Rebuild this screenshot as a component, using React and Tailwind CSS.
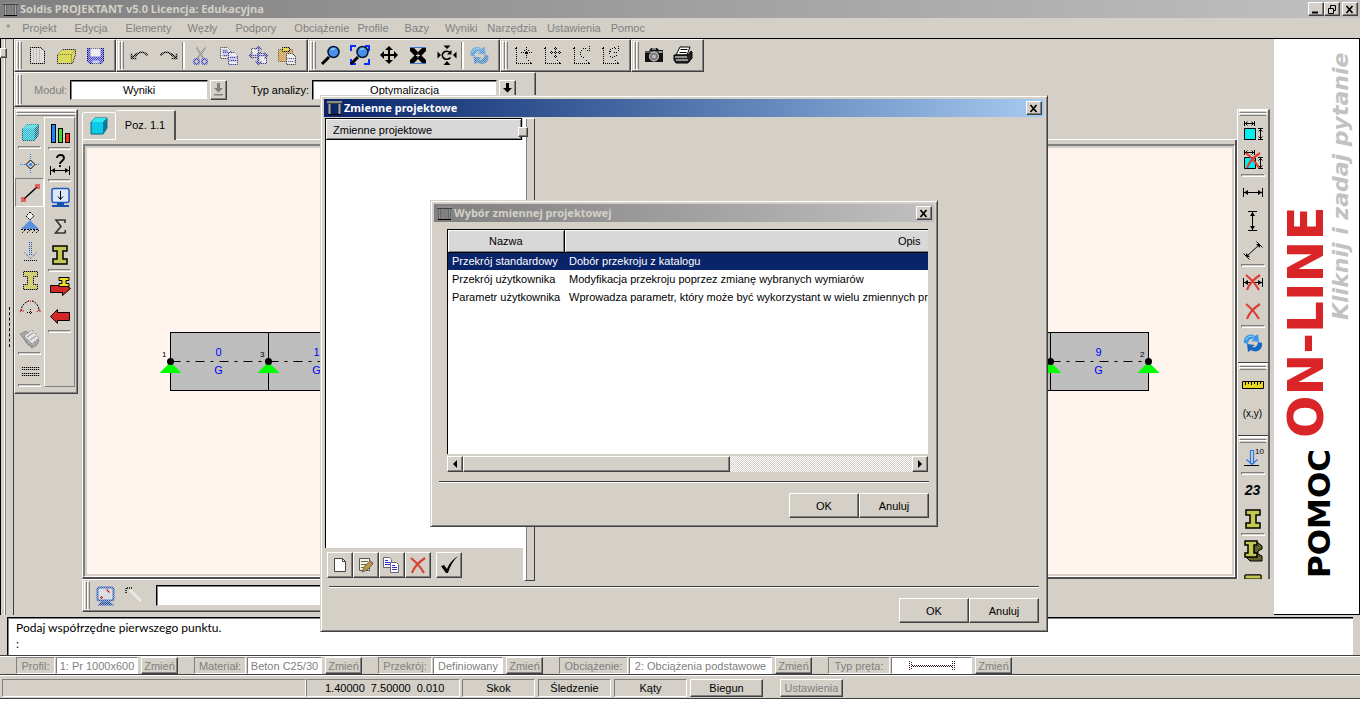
import React from 'react';
import clsx from 'clsx';

const MENU = [
  ['Projekt', 'mr-[18px]'], ['Edycja', 'mr-[18px]'], ['Elementy', 'mr-4'], ['Węzły', 'mr-[18px]'],
  ['Podpory', 'mr-[18px]'], ['Obciążenie', 'mr-2'], ['Profile', 'mr-4'], ['Bazy', 'mr-4'],
  ['Wyniki', 'mr-2.5'], ['Narzędzia', 'mr-2.5'], ['Ustawienia', 'mr-2.5'], ['Pomoc', ''],
];

const ROWS = [
  ['Przekrój standardowy', 'Dobór przekroju z katalogu'],
  ['Przekrój użytkownika', 'Modyfikacja przekroju poprzez zmianę wybranych wymiarów'],
  ['Parametr użytkownika', 'Wprowadza parametr, który może być wykorzystant w wielu zmiennych projektowych'],
];

const RAISED = 'border border-t-white border-l-white border-r-[#404040] border-b-[#404040] shadow-[inset_-1px_-1px_0_#808080]';
const SUNKEN = 'border border-t-[#808080] border-l-[#808080] border-r-white border-b-white';
const FIELD = 'bg-white border border-t-black border-l-black border-b-[#d4d0c8] border-r-[#d4d0c8] shadow-[inset_1px_1px_0_#808080]';
// checkerboard mask used for disabled pictures
const DITHER = '[mask-image:conic-gradient(#000_25%,#0004_0_50%,#000_0_75%,#0004_0)] [mask-size:2px_2px]';

/* ---------- icons ---------- */

function Ico({ children, dim, size = 24 }) {
  return (
    <svg width={size} height={size} viewBox={`0 0 ${size} ${size}`} fill="none" className={clsx('shrink-0', dim && DITHER)} aria-hidden="true">
      {dim ? <g transform="translate(.5 .5)">{children}</g> : children}
    </svg>
  );
}

function AppIcon({ muted }) {
  return (
    <svg width="15" height="14" viewBox="0 0 15 14" shapeRendering="crispEdges" className="shrink-0" aria-hidden="true">
      <path d="M0 0h15v2H0z" fill={muted ? '#8c8c8c' : '#8a8a8a'} />
      <path d="M0 2h15v1H0z" fill="#404040" />
      <path d="M1 3h3v10H1zM11 3h3v10h-3z" fill="#686868" />
      <path d="M2 3h1v10H2zM12 3h1v10h-1z" fill={muted ? '#8c8c8c' : '#a8a8a8'} />
      <path d="M1 13h13v1H1z" fill="#000" />
    </svg>
  );
}

const Page = () => (
  <Ico dim>
    <path d="M5 4h10l4 3v13H5z" fill="#e8e8e8" stroke="#000" />
    <path d="M8 5v14M11 5v14M14 5v14" stroke="#aaa" />
  </Ico>
);
const Folder = () => (
  <Ico dim>
    <path d="M3 20v-9l5-5h13v5l-3 9z" fill="#e0e020" stroke="#222" />
    <path d="M4 11h13l4-5M17 11v8" stroke="#888800" />
  </Ico>
);
const Disk = () => (
  <Ico dim>
    <path d="M4 5h16v13l-2 2H6l-2-2z" fill="#4848e8" stroke="#000080" />
    <path d="M7 5h10v8H7z" fill="#fff" /><path d="M9 17h7v3H9z" fill="#ccf" />
  </Ico>
);
const Undo = () => (
  <Ico dim><path d="M8 13c2-5 9-6 12-1M4 10v5h5M4 15l5-5" stroke="#000" strokeWidth="1.600" /></Ico>
);
const Redo = () => (
  <Ico dim><path d="M16 13c-2-5-9-6-12-1M20 10v5h-5M20 15l-5-5" stroke="#000" strokeWidth="1.600" /></Ico>
);
const Scissors = () => (
  <Ico dim>
    <path d="M8 4l7 11M17 4L9 15" stroke="#888" strokeWidth="2" />
    <circle cx="8" cy="18" r="2.500" stroke="#4848c8" strokeWidth="2" /><circle cx="16" cy="18" r="2.500" stroke="#4848c8" strokeWidth="2" />
  </Ico>
);
const CopyDim = () => (
  <Ico dim>
    <path d="M3 4h7l3 3v8H3z" fill="#fff" stroke="#555" /><path d="M5 7h5M5 9h6M5 12h6" stroke="#44c" strokeWidth="1.500" />
    <path d="M11 9h6l3 3v9h-9z" fill="#fff" stroke="#44a" /><path d="M12 14h7M12 17h7" stroke="#44c" strokeWidth="1.500" />
  </Ico>
);
const CopyMove = () => (
  <Ico dim>
    <path d="M5 5h6l3 3v6H5z" fill="#fff" stroke="#555" /><path d="M11 10h6l3 3v7h-9z" fill="#fff" stroke="#44a" />
    <path d="M12 3v18M3 12h18M9 6l3-3 3 3M9 18l3 3 3-3M18 9l3 3-3 3M6 9l-3 3 3 3" stroke="#44a" strokeWidth="1.500" />
  </Ico>
);
const Paste = () => (
  <Ico dim>
    <path d="M3 6h14v12H3z" fill="#d8a040" stroke="#806020" /><path d="M7 4h7v4H7z" fill="#f0e000" stroke="#000" />
    <path d="M11 10h6l3 3v8h-9z" fill="#fff" stroke="#444" /><path d="M12 15h7M12 18h7" stroke="#66c" />
  </Ico>
);
const Lens = () => (
  <>
    <path d="M3 21l7-7" stroke="#000" strokeWidth="3" />
    <circle cx="14.500" cy="9" r="5.500" fill="#4a90e8" stroke="#001830" strokeWidth="1.500" />
    <path d="M12 7c1-1 2-2 4-1" stroke="#9cf" strokeWidth="1.500" />
  </>
);
const Zoom = () => <Ico><Lens /></Ico>;
const ZoomAll = () => (
  <Ico><path d="M3 8V3h5M17 3h4v5M21 16v5h-5M8 21H3v-5" stroke="#0030ff" strokeWidth="2" /><Lens /></Ico>
);
const Move = () => (
  <Ico>
    <path d="M12 5v14M5 12h14" stroke="#000" strokeWidth="2" />
    <path d="M12 3l4 4H8zM12 21l4-4H8zM3 12l4-4v8zM21 12l-4-4v8z" fill="#000" />
  </Ico>
);
const Fit = () => (
  <Ico>
    <path d="M4 4.500h16M4 20.500h16" stroke="#3a78d0" />
    <path d="M4 5h4l4 4 4-4h4v3l-4.500 4.500L20 17v3h-4l-4-4-4 4H4v-3l4.500-4.500L4 8z" fill="#000" />
    <path d="M10 12.500h4M12 10.500v4" stroke="#d4d0c8" />
  </Ico>
);
const Orbit = () => (
  <Ico>
    <path d="M12 6L8.500 2.500h7zM12 18l-3.500 4h7zM6 12L2.500 8.500v7zM18 12l3.500-3.500v7z" fill="#000" />
    <path d="M15.500 10A4.500 4 0 1 0 15.500 14.500" stroke="#000" strokeWidth="1.600" /><path d="M16.500 7v4.500H12z" fill="#000" />
  </Ico>
);
const Refresh = ({ dim }) => (
  <Ico dim={dim}>
    <path d="M3 12c-1-6 5-11 11-7l3-2 1 8-8-1 3-2c-3-1-6 1-6 5z" fill="#3a98e8" />
    <path d="M21 12c1 6-5 11-11 7l-3 2-1-8 8 1-3 2c3 1 6-1 6-5z" fill={dim ? '#3a88d0' : '#1668c0'} />
    <path d="M5 9c1-3 4-5 8-3" stroke="#9cd4ff" />
  </Ico>
);
const Axis = ({ kind }) => (
  <Ico>
    <g stroke="#000" strokeDasharray="1 1" shapeRendering="crispEdges">
      <path d="M5.500 5v16M5 20.500h15M2.500 7.500l3-3 3 3M17.500 17.500l3 3-3 3" />
      {kind === 'plus' && <path d="M15.500 4v11M10 9.500h11M13.500 7.500l4 4M17.500 7.500l-4 4" />}
      {kind === 'move' && <path d="M15.500 4v11M10 9.500h11M13.500 5.500h4M13.500 13.500h4M11.500 7.500v4M19.500 7.500v4" />}
      {kind === 'c' && <path d="M20.500 3v4.500h-4M18.500 6.500l-3-2-3 2-1 4 1 3 3 1 3-2" />}
      {kind === 'g' && <path d="M20.500 3v4.500M18.500 5.500l-3-1-3 2-1 4 1 3 3 1 3-2 1-3h-4" />}
    </g>
  </Ico>
);
const Camera = () => (
  <Ico>
    <path d="M3 8h4l2-3h6l2 2h4v12H3z" fill="#111" /><path d="M3 8h18v2H3z" fill="#555" />
    <circle cx="12" cy="13.500" r="4.500" fill="#777" stroke="#ddd" /><circle cx="12" cy="13.500" r="2" fill="#bbb" />
    <path d="M10 6h4M17 9h3" stroke="#eee" />
  </Ico>
);
const Printer = () => (
  <Ico>
    <path d="M9 4h10l-3 8H5z" fill="#fff" stroke="#000" /><path d="M9.500 6.500h7M8.500 9.500h7" stroke="#000" />
    <path d="M3 12h14l3-4 1 1v6l-4 5H5l-2-3z" fill="#222" stroke="#000" /><path d="M4 14h12M5 17h12" stroke="#fff" />
  </Ico>
);
const Cube = ({ dim }) => (
  <Ico dim={dim}>
    <path d="M4 8l4-4h12v10l-4 6H4z" fill="#10c8e8" stroke="#006878" /><path d="M4 8l4-4h12l-4 4z" fill="#30e8f0" />
    <path d="M16 8l4-4v10l-4 6z" fill="#0878a0" />
  </Ico>
);
const Bars = () => (
  <Ico>
    <g stroke="#000" shapeRendering="crispEdges">
      <path d="M3 3h4v18H3z" fill="#1888ff" /><path d="M10 7h4v14h-4z" fill="#40e020" /><path d="M17 12h4v9h-4z" fill="#ff3010" />
    </g>
  </Ico>
);
const Node = () => (
  <Ico>
    <path d="M12.500 2v20M2 12.500h20" stroke="#2080ff" strokeDasharray="1 1" shapeRendering="crispEdges" />
    <path d="M12.500 8l4.500 4.500-4.500 4.500L8 12.500z" fill="#d4d0c8" stroke="#000" /><circle cx="12.500" cy="12.500" r="1.500" fill="#2080ff" />
  </Ico>
);
const Rod = () => (
  <Ico>
    <path d="M6 18L19 6" stroke="#000" strokeWidth="1.500" />
    <path d="M3 16h5v5H3zM17 3h5v5h-5z" fill="#e02020" fillOpacity=".6" />
  </Ico>
);
const Support = () => (
  <Ico>
    <path d="M12 10l9 9H3z" fill="#5a90e0" />
    <path d="M12 2l4 4-4 4-4-4z" fill="#eee" stroke="#000" strokeDasharray="2 1" />
    <path d="M3 19.500h18M7 20l-3 3M12 20l-3 3M17 20l-3 3M21 20l-3 3" stroke="#000" strokeDasharray="2 1" />
  </Ico>
);
const Load = () => (
  <Ico>
    <path d="M11.500 3v14M13.500 3v14M6.500 13.500l6 6 6-6" stroke="#2050b8" strokeDasharray="1 1" />
    <path d="M6 21.500h13" stroke="#000" strokeDasharray="1 1" shapeRendering="crispEdges" />
  </Ico>
);
const BEAM = 'M5 3h14v5h-4v8h4v5H5v-5h4V8H5z';
const Beam = ({ dim }) => (
  <Ico dim={dim}><path d={BEAM} fill={dim ? '#d0d040' : '#c4c850'} stroke="#000" strokeWidth={dim ? 1 : 1.5} /></Ico>
);
const Beam3d = () => (
  <Ico>
    <path d="M16 3l5 4v3l-4 2v3l4 2v5H9l-5-5z" fill="#606028" stroke="#000" />
    <path d="M4 2h12v4h-3v8h3v4H4v-4h3V6H4z" fill="#c4c850" stroke="#000" strokeWidth="1.500" />
  </Ico>
);
const Arc = () => (
  <Ico>
    <path d="M3 14c0-5 4-9 8-10M14 4c4 1 7 5 7 10" stroke="#000" strokeDasharray="2 1" />
    <path d="M10 4h5M2 15l2-2 2 2M19 15l2-2 2 2" stroke="#d22" strokeWidth="1.500" strokeDasharray="1 1" />
    <path d="M12.500 12v6M9 15.500h6" stroke="#000" strokeDasharray="1 1" />
  </Ico>
);
const Catalog = () => (
  <Ico>
    <path d="M2 8l6-3 13 9-2 5-5 3z" fill="#a8a8a8" stroke="#666" strokeDasharray="1 1" />
    <path d="M6 10l8-6 7 8-7 6z" fill="#e4e4e4" stroke="#777" strokeDasharray="1 1" />
    <path d="M9 11l6-4M12 14l6-4M4 10l5 8 6 3" stroke="#888" />
  </Ico>
);
const Ground = () => (
  <Ico dim><path d="M3 9h18M3 11h18M3 15h18M3 17h18" stroke="#000" /></Ico>
);
const HArrow = ({ y = 12 }) => (
  <>
    <path d={`M2.500 ${y - 4}v9M21.500 ${y - 4}v9M3 ${y + 0.5}h18`} stroke="#000" />
    <path d={`M3 ${y + 0.5}l4-2.500v5zM21 ${y + 0.5}l-4-2.500v5z`} fill="#000" />
  </>
);
const Query = () => (
  <Ico>
    <HArrow y={17} />
    <path d="M9 5c0-4 7-4 7 0 0 3-4 3-4 6M12 12v2" stroke="#000" strokeWidth="1.800" />
  </Ico>
);
const Monitor = () => (
  <Ico>
    <rect x="4" y="3.500" width="17" height="14" rx="2" fill="#dce8f8" stroke="#2058c0" strokeWidth="1.500" />
    <path d="M12.500 6v8M10 11.500l2.500 3 2.500-3" stroke="#000" /><path d="M9 18h7v2h5v2H4v-2h5z" fill="#1850b0" />
  </Ico>
);
const Sigma = () => (
  <Ico><path d="M17 9V6H8l5 6.500L7.500 19H17l.5-3" stroke="#333" strokeWidth="1.600" /></Ico>
);
const RightRed = () => (
  <Ico>
    <path d="M2.500 10.500h12v-3l8 6-8 7v-3h-12z" fill="#d42828" stroke="#000" />
    <path d="M11 2.500h10v3h-3v3h3v3H11v-3h3v-3h-3z" fill="#f0e020" stroke="#000" />
  </Ico>
);
const LeftRed = () => (
  <Ico><path d="M21.500 8.500h-12v-3l-7 7 7 7v-3h12z" fill="#d42828" stroke="#000" /></Ico>
);
const Cross = () => (
  <path d="M5 5c5 4 9 8 13 15M19 5C13 9 8 14 6 20" stroke="#dc4034" strokeWidth="2.200" />
);
const DimBox = ({ crossed }) => (
  <Ico>
    <path d="M3.500 9.500h11v11h-11z" fill="#00f0f0" stroke="#000" />
    <path d="M3.500 2v5M13.500 2v5M4 4.500h9M17 9.500h5M17 20.500h5M19.500 10v10M6.500 2.500l-2 2 2 2M10.500 2.500l2 2-2 2M17.500 12.500l2-2 2 2M17.500 17.500l2 2 2-2" stroke="#000" />
    {crossed && <Cross />}
  </Ico>
);
const DimH = ({ crossed }) => <Ico><HArrow />{crossed && <Cross />}</Ico>;
const DimV = () => (
  <Ico><g transform="rotate(90 12 12)"><HArrow /></g></Ico>
);
const DimSkew = () => (
  <Ico>
    <path d="M6 18L18 7M2.500 15.500l6 6M15.500 3.500l6 6" stroke="#000" />
    <path d="M5 19v-4l4 4zM19 6v4l-4-4z" fill="#000" />
  </Ico>
);
const RedX = () => <Ico><Cross /></Ico>;
const Ruler = () => (
  <Ico><path d="M1.500 8.500h21v7h-21z" fill="#e8d820" stroke="#000" /><path d="M4.500 9v3M7.500 9v2M10.500 9v3M13.500 9v2M16.500 9v3M19.500 9v2" stroke="#000" /></Ico>
);
const Coords = () => <span className="text-[10px] leading-4">(x,y)</span>;
const Load10 = () => (
  <Ico>
    <path d="M9.500 4.500h3v13h-3zM5.500 13.500l5.500 5 5.500-5" stroke="#2878e8" strokeWidth="1.200" /><path d="M3 19.500h15" stroke="#000" />
    <text x="14" y="8" fontSize="8" fill="#000">10</text>
  </Ico>
);
const Num23 = () => <span className="text-sm leading-4 font-bold italic">23</span>;
const BeamCut = () => (
  <Ico><path d="M4 7h16v16H4z" fill="#707030" stroke="#000" /><path d="M4 7h16v4H4z" fill="#c4c850" stroke="#000" /></Ico>
);
const Screen = () => (
  <Ico dim><rect x="4" y="4" width="16" height="13" rx="2" fill="#dce8f8" stroke="#2058c0" strokeWidth="2" /><path d="M13 6l3 3M7 13l2 2" stroke="#d00" strokeWidth="2" /><path d="M8 18h8l5 4H4z" fill="#1850b0" /></Ico>
);
const Wand = () => (
  <Ico><path d="M8 7l11 11" stroke="#fff" strokeWidth="3" strokeDasharray="1 1" /><path d="M4 10V5h6" stroke="#000" strokeWidth="1.500" strokeDasharray="1 1" /></Ico>
);
const NewDoc = () => (
  <Ico><path d="M6.500 5.500h8l3 3v10h-11z" fill="#fff" stroke="#444" /><path d="M14.500 5.500v3h3" stroke="#444" /></Ico>
);
const EditDoc = () => (
  <Ico>
    <path d="M5.500 5.500h10v12h-10z" fill="#f4f4d8" stroke="#556" /><path d="M7 8.500h7M7 11.500h7M7 14.500h5" stroke="#666" />
    <path d="M8 19l2-5 6-6 3 3-6 6z" fill="#b89840" stroke="#665" /><path d="M16 8l3 3" stroke="#a66" strokeWidth="2" />
  </Ico>
);
const CopyDoc = () => (
  <Ico>
    <path d="M3.500 4.500h6l2 2v8h-8z" fill="#fff" stroke="#667" /><path d="M5 7.500h3M5 9.500h5M5 11.500h5" stroke="#33d" />
    <path d="M10.500 9.500h6l2 2v8h-8z" fill="#fff" stroke="#667" /><path d="M12 12.500h3M12 14.500h5M12 16.500h5" stroke="#33d" />
  </Ico>
);
const Check = () => (
  <Ico><path d="M4 13l3-1 3 4c2-5 5-9 11-13-5 5-8 10-10 17H9z" fill="#000" /></Ico>
);

/* ---------- building blocks ---------- */

function Grip({ wide }) {
  return wide ? (
    <div className="h-1.5 shrink-0 flex flex-col px-px" aria-hidden="true">
      <i className="h-[3px] border border-white border-b-[#808080]" />
      <i className="h-[3px] border border-white border-b-[#808080]" />
    </div>
  ) : (
    <div className="w-[7px] shrink-0 flex pl-px py-px" aria-hidden="true">
      <i className="w-[3px] border border-white border-r-[#808080]" />
      <i className="w-[3px] border border-white border-r-[#808080]" />
    </div>
  );
}

function Sep({ upright }) {
  return upright ? (
    <i className="w-[3px] my-0.5 border-l border-l-[#808080] border-r-2 border-r-white" />
  ) : (
    <i className="h-[3px] mx-[3px] shrink-0 border border-t-[#808080] border-l-[#808080] border-r-white border-b-white" />
  );
}

function Tool({ icon: Icon, name, pressed, ...rest }) {
  return (
    <button type="button" aria-label={name} className={clsx('w-[29px] h-[29px] shrink-0 flex items-center justify-center', pressed && SUNKEN)}>
      <Icon {...rest} />
    </button>
  );
}

const Bar = ({ children }) => (
  <div role="toolbar" className={clsx('flex pr-1.5 h-[33px] items-stretch', RAISED)}>
    <Grip />
    {children}
  </div>
);

function Combo({ id, label, value, width, disabled }) {
  return (
    <div className="flex items-center">
      <label htmlFor={id} className={clsx('mr-[3px]', disabled && 'text-[#808080]')}>{label}</label>
      <select id={id} className={clsx('h-5 appearance-none text-black [text-align-last:center] outline-none', FIELD, width)}>
        <option>{value}</option>
      </select>
      <button type="button" aria-label={`Rozwiń: ${label}`} className={clsx('ml-0.5 w-[17px] h-5 flex items-center justify-center', RAISED)}>
        <svg width="9" height="13" viewBox="0 0 9 13" fill={disabled ? '#808080' : '#000'} aria-hidden="true">
          <path d="M3 0h3v5h3L4.500 9.500 0 5h3z" />
          {disabled && <path d="M0 11h9v1.500H0z" />}
        </svg>
      </button>
    </div>
  );
}

const PushButton = ({ children }) => (
  <button type="button" className={clsx('w-[70px] h-[25px] text-center', RAISED)}>{children}</button>
);

function CaptionButton({ name, children }) {
  return (
    <button type="button" aria-label={name} className={clsx('w-4 h-3.5 bg-[#d4d0c8] flex items-center justify-center', RAISED)}>
      <svg width="10" height="9" viewBox="0 0 10 9" fill="none" stroke="#000" aria-hidden="true">{children}</svg>
    </button>
  );
}

const CLOSE = <path d="M1.500 1l6 7M7.500 1l-6 7" strokeWidth="1.700" />;

function Caption({ title, className, muted, children }) {
  return (
    <header className={clsx('h-[18px] shrink-0 flex items-center gap-0.5 pl-[3px] pr-0.5', className)}>
      <AppIcon muted={muted} />
      <h2 className="flex-1 font-['Noto_Sans',sans-serif] font-bold text-[11px] leading-4 whitespace-nowrap">{title}</h2>
      {children}
    </header>
  );
}

const Rule = () => <div className="h-0.5 shrink-0 border-t border-t-[#404040] border-b border-b-white" />;

/* ---------- main window parts ---------- */

function TopToolbars() {
  return (
    <>
      <div className="flex">
        <Bar>
          <Tool icon={Page} name="Nowy" /><Tool icon={Folder} name="Otwórz" /><Tool icon={Disk} name="Zapisz" />
        </Bar>
        <Bar>
          <Tool icon={Undo} name="Cofnij" /><Tool icon={Redo} name="Ponów" />
          <Sep upright />
          <Tool icon={Scissors} name="Wytnij" /><Tool icon={CopyDim} name="Kopiuj" />
          <Tool icon={CopyMove} name="Kopiuj z przesunięciem" /><Tool icon={Paste} name="Wklej" />
        </Bar>
        <Bar>
          <Tool icon={Zoom} name="Lupa" /><Tool icon={ZoomAll} name="Pokaż wszystko" /><Tool icon={Move} name="Przesuń" />
          <Tool icon={Fit} name="Dopasuj" /><Tool icon={Orbit} name="Obróć" />
          <Sep upright />
          <Tool icon={Refresh} dim name="Odśwież" />
        </Bar>
        <Bar>
          <Tool icon={Axis} kind="plus" name="Układ" /><Tool icon={Axis} kind="move" name="Przesuń układ" />
          <Tool icon={Axis} kind="c" name="Obróć układ" /><Tool icon={Axis} kind="g" name="Układ globalny" />
        </Bar>
        <Bar>
          <Tool icon={Camera} name="Zdjęcie" /><Tool icon={Printer} name="Drukuj" />
        </Bar>
      </div>
      <div className={clsx('w-[522px] h-[35px] flex items-stretch', RAISED)}>
        <Grip />
        <div className="flex items-center gap-6 pl-3">
          <Combo id="modul" label="Moduł:" value="Wyniki" width="w-[138px]" disabled />
          <Combo id="analiza" label="Typ analizy:" value="Optymalizacja" width="w-[185px]" />
        </div>
      </div>
    </>
  );
}

function LeftTools() {
  return (
    <div role="toolbar" className={clsx('mt-0.5 w-16 self-start flex flex-col pb-1.5', RAISED)}>
      <Grip wide />
      <div className="flex pt-px pr-0.5">
        <div className="flex flex-col w-[30px]">
          <Tool icon={Cube} dim name="Bryła" />
          <Sep />
          <Tool icon={Node} name="Węzeł" /><Tool icon={Rod} pressed name="Pręt" /><Tool icon={Support} name="Podpora" />
          <Tool icon={Load} name="Obciążenie" /><Tool icon={Beam} dim name="Profil" /><Tool icon={Arc} name="Łuk" />
          <Tool icon={Catalog} name="Baza" />
          <Sep />
          <Tool icon={Ground} name="Podłoże" />
          <Sep />
        </div>
        <div className="flex flex-col w-[31px] border border-t-white border-l-white border-r-[#808080] border-b-[#808080]">
          <Tool icon={Bars} name="Wykresy" />
          <Sep />
          <Tool icon={Query} name="Odczyt" />
          <Sep />
          <Tool icon={Monitor} name="Ekran" /><Tool icon={Sigma} name="Suma" /><Tool icon={Beam} name="Przekrój" />
          <Sep />
          <Tool icon={RightRed} name="Zastosuj profil" /><Tool icon={LeftRed} name="Wstecz" />
          <Sep />
        </div>
      </div>
    </div>
  );
}

function RightTools() {
  return (
    <div role="toolbar" className="mt-0.5 w-[33px] shrink-0 flex flex-col overflow-hidden border-t border-l border-white border-r-2 border-r-[#606060]">
      <Grip wide />
      <Tool icon={DimBox} name="Wymiaruj" /><Tool icon={DimBox} crossed name="Usuń wymiarowanie" />
      <Sep />
      <Tool icon={DimH} name="Wymiar poziomy" /><Tool icon={DimV} name="Wymiar pionowy" /><Tool icon={DimSkew} name="Wymiar ukośny" />
      <Sep />
      <Tool icon={DimH} crossed name="Usuń wymiary" /><Tool icon={RedX} name="Usuń" />
      <Sep />
      <Tool icon={Refresh} name="Odśwież wymiary" />
      <div className="mt-[5px] border-t border-t-[#404040] border-b border-b-white shrink-0" />
      <Grip wide />
      <Tool icon={Ruler} name="Miarka" /><Tool icon={Coords} name="Współrzędne" />
      <div className="mt-[7px] border-t border-t-[#404040] border-b border-b-white shrink-0" />
      <Grip wide />
      <Tool icon={Load10} name="Wartości obciążeń" />
      <Sep />
      <Tool icon={Num23} name="Numeracja" /><Tool icon={Beam} name="Opis profilu" />
      <Sep />
      <Tool icon={Beam3d} name="Profil 3D" /><Tool icon={BeamCut} name="Rzut" />
    </div>
  );
}

const SPANS = Array.from({ length: 10 }, (_, i) => i);
const nodeX = (i) => Math.round(85 + i * 97.8) + 0.5;

function Model() {
  return (
    <svg width="1080" height="100" className="absolute left-0 top-[171px]" fontSize="11" aria-label="Schemat belki">
      {SPANS.map((i) => (
        <g key={i}>
          <rect x={nodeX(i)} y="15.500" width={nodeX(i + 1) - nodeX(i)} height="58" fill="#bebebe" stroke="#000" />
          <path d={`M${nodeX(i)} 44.500H${nodeX(i + 1)}`} stroke="#000" strokeDasharray="9 6 3 6" strokeDashoffset="-1" />
          <text x={nodeX(i) + 48} y="39" textAnchor="middle" fill="#0000ff">{i}</text>
          <text x={nodeX(i) + 48} y="57" textAnchor="middle" fill="#0000ff">G</text>
        </g>
      ))}
      {[...SPANS, 10].map((i) => (
        <g key={i}>
          <path d={`M${nodeX(i)} 45l11 11h-22z`} fill="#00ff00" />
          <circle cx={nodeX(i)} cy="44.500" r="3.500" />
          <text x={nodeX(i) - 4} y="40" textAnchor="end" fontSize="8">{i === 0 ? 1 : i === 10 ? 2 : i + 2}</text>
        </g>
      ))}
    </svg>
  );
}

function Workspace() {
  return (
    <div className="flex-1 min-w-0 ml-1 flex flex-col">
      <div className="flex items-end pt-[3px]">
        <button type="button" aria-label="Widok 3D" className="w-[34px] h-7 border-t border-l border-r border-b border-white rounded-t-[2px] flex items-center justify-center">
          <Cube />
        </button>
        <button type="button" className="w-[60px] h-[30px] pb-0.5 border-t border-t-white border-r-2 border-r-[#505050] rounded-t-[2px]">Poz. 1.1</button>
        <i className="flex-1 border-b border-white" />
      </div>
      <div className="flex-1 min-h-0 flex border-l border-l-white border-r-2 border-r-[#505050] border-b-2 border-b-[#505050] pt-1">
        <main className="relative flex-1 overflow-hidden bg-[#fff4ee] border-t-2 border-t-[#808080] border-l-2 border-l-[#808080] border-r border-b border-white shadow-[inset_0_0_0_2px_#d4d0c8]">
          <Model />
        </main>
      </div>
    </div>
  );
}

function HelpBanner() {
  return (
    <a href="#pomoc" className="w-[86px] shrink-0 bg-white border-r border-b border-black overflow-hidden">
      <svg width="85" height="576" viewBox="0 0 85 576" className="font-['DejaVu_Sans',sans-serif] font-bold">
        <text transform="translate(56 539) rotate(-90)" fontSize="31">POMOC</text>
        <text transform="translate(49 399) rotate(-90)" fontSize="50" fill="#d92528">ON-LINE</text>
        <text transform="translate(74 281) rotate(-90)" fontSize="22" fontStyle="italic" fill="#c2c2c2">Kliknij i zadaj pytanie</text>
      </svg>
    </a>
  );
}

function Property({ label, labelW, value, valueW, children }) {
  return (
    <div className="flex items-center text-[#808080]">
      <span className={clsx('h-[17px] leading-4 text-center', SUNKEN, labelW)}>{label}</span>
      <span className={clsx('ml-px h-[17px] leading-4 bg-white whitespace-nowrap flex items-center justify-center', SUNKEN, valueW)}>{value}{children}</span>
      <button type="button" className={clsx('ml-[3px] w-[37px] h-[17px] leading-3', RAISED)}>Zmień</button>
    </div>
  );
}

function BottomBars() {
  return (
    <>
      <div className="mt-0.5 h-[38px] mx-[7px] bg-white border-t border-l border-black shadow-[inset_1px_1px_0_#808080] pl-2 pt-0.5 font-['Lato',sans-serif] text-xs leading-4">
        <p>Podaj współrzędne pierwszego punktu.</p>
        <p>:</p>
      </div>
      <div className="h-5 flex items-end gap-4 pl-4 border-t border-t-[#404040] border-b border-b-[#404040] shadow-[inset_0_1px_0_#fff]">
        <Property label="Profil:" labelW="w-[39px]" value="1: Pr 1000x600" valueW="w-[82px]" />
        <Property label="Materiał:" labelW="w-[52px]" value="Beton C25/30" valueW="w-[75px]" />
        <Property label="Przekrój:" labelW="w-[54px]" value="Definiowany" valueW="w-[70px]" />
        <Property label="Obciążenie:" labelW="w-[69px]" value="2: Obciążenia podstawowe" valueW="w-[143px]" />
        <Property label="Typ pręta:" labelW="w-[62px]" valueW="w-[81px]">
          <svg width="48" height="12" viewBox="0 0 48 12" fill="none" stroke="#401818" strokeDasharray="1 1" shapeRendering="crispEdges" aria-label="Pręt obustronnie utwierdzony">
            <path d="M1.500 1v10M3.500 2v8M46.500 1v10M44.500 1v10" /><path d="M4 5.500h40M5 6.500h39" />
          </svg>
        </Property>
      </div>
      <footer className="h-6 flex items-start pt-[3px] border-t border-white border-b border-b-[#404040] pl-0.5">
        <div className={clsx('w-[304px] h-[18px]', SUNKEN)} />
        <output className={clsx('w-[154px] h-[18px] leading-4 pl-[18px] whitespace-pre', SUNKEN)}>1.40000  7.50000  0.010</output>
        <button type="button" className={clsx('ml-0.5 w-[73px] h-[18px] leading-4', SUNKEN)}>Skok</button>
        <button type="button" className={clsx('ml-[3px] w-[73px] h-[18px] leading-4', SUNKEN)}>Śledzenie</button>
        <button type="button" className={clsx('ml-[3px] w-[73px] h-[18px] leading-4', SUNKEN)}>Kąty</button>
        <button type="button" className={clsx('ml-[3px] w-[73px] h-[18px] leading-4', RAISED)}>Biegun</button>
        <button type="button" className={clsx('ml-[17px] w-[63px] h-[18px] leading-4 text-[#808080]', RAISED)}>Ustawienia</button>
      </footer>
    </>
  );
}

/* ---------- dialogs ---------- */

const FRAME = 'absolute bg-[#d4d0c8] flex flex-col p-[3px] border border-[#d4d0c8] border-r-[#404040] border-b-[#404040] shadow-[inset_1px_1px_0_#fff,inset_-1px_-1px_0_#808080]';

function VariablesDialog() {
  return (
    <section role="dialog" aria-label="Zmienne projektowe" className={clsx('left-[320px] top-[95px] w-[728px] h-[537px]', FRAME)}>
      <Caption title="Zmienne projektowe" className="bg-linear-to-r from-[#0a246a] to-[#a6caf0] text-white">
        <CaptionButton name="Zamknij">{CLOSE}</CaptionButton>
      </Caption>
      <div className="flex flex-1 mt-px">
        <div className="w-[199px] flex flex-col pl-px">
          <div className="h-[22px] mr-px flex items-center pt-px bg-[#d8d8d8] border border-black shadow-[inset_1px_1px_0_#fff,inset_-1px_-1px_0_#808080] pl-[7px]">Zmienne projektowe</div>
          <div className="flex-1 bg-white border-l border-black" />
          <div className="h-[33px] flex items-center pl-0.5">
            {[[NewDoc, 'Nowa'], [EditDoc, 'Edytuj'], [CopyDoc, 'Kopiuj zmienną'], [RedX, 'Usuń zmienną']].map(([Icon, name]) => (
              <button key={name} type="button" aria-label={name} className={clsx('w-[26px] h-[26px] flex items-center justify-center', RAISED)}>
                <Icon />
              </button>
            ))}
            <button type="button" aria-label="Zatwierdź" className={clsx('ml-[5px] w-[26px] h-[26px] flex items-center justify-center', RAISED)}>
              <Check />
            </button>
          </div>
        </div>
        <div className="relative w-3 border-l-3 border-l-white border-t border-t-white border-r border-b border-r-[#404040] border-b-[#404040] shadow-[inset_1px_0_0_#808080]">
          <i className={clsx('absolute -left-2 top-2 w-2.5 h-2.5 bg-[#d4d0c8]', RAISED)} />
        </div>
      </div>
      <div className="px-[5px] pt-[5px]">
        <Rule />
        <div className="flex justify-end pt-2.5 pb-[5px]">
          <PushButton>OK</PushButton>
          <PushButton>Anuluj</PushButton>
        </div>
      </div>
    </section>
  );
}

function PickDialog() {
  return (
    <section role="dialog" aria-label="Wybór zmiennej projektowej" className={clsx('left-[430px] top-[200px] w-[508px] h-[327px]', FRAME)}>
      <Caption title="Wybór zmiennej projektowej" muted className="bg-linear-to-r from-[#808080] to-[#c0c0c0] text-[#d4d0c8]">
        <CaptionButton name="Zamknij">{CLOSE}</CaptionButton>
      </Caption>
      <div className="flex-1 flex flex-col pl-[13px] pr-1.5 pt-[7px]">
        <div className="flex-1 bg-white border-t border-l border-black overflow-hidden">
          <table className="w-[806px] table-fixed border-collapse">
            <thead>
              <tr className="h-[22px] bg-[#d8d8d8]">
                <th className="w-[116px] p-0 font-normal border-b border-r border-black shadow-[inset_1px_1px_0_#fff,inset_-1px_-1px_0_#808080]">Nazwa</th>
                <th className="p-0 font-normal border-b border-black shadow-[inset_1px_1px_0_#fff,inset_-1px_-1px_0_#808080]">Opis</th>
              </tr>
            </thead>
            <tbody>
              {ROWS.map(([name, desc], i) => (
                <tr key={name} className={clsx('h-[18px]', i === 0 && 'bg-[#0a246a] text-white')}>
                  <td className="py-0 pl-1 whitespace-nowrap">{name}</td>
                  <td className="py-0 pl-[5px] whitespace-nowrap">{desc}</td>
                </tr>
              ))}
            </tbody>
          </table>
        </div>
        <div className="h-4 mt-0.5 flex bg-[conic-gradient(#fff_25%,#d4d0c8_0_50%,#fff_0_75%,#d4d0c8_0)] bg-size-[2px_2px]">
          <button type="button" aria-label="Przewiń w lewo" className={clsx('w-4 bg-[#d4d0c8] flex items-center justify-center', RAISED)}>
            <svg width="4" height="8" viewBox="0 0 4 8" aria-hidden="true"><path d="M4 0v8L0 4z" /></svg>
          </button>
          <div className={clsx('w-[267px] bg-[#d4d0c8]', RAISED)} />
          <button type="button" aria-label="Przewiń w prawo" className={clsx('ml-auto w-4 bg-[#d4d0c8] flex items-center justify-center', RAISED)}>
            <svg width="4" height="8" viewBox="0 0 4 8" aria-hidden="true"><path d="M0 0v8l4-4z" /></svg>
          </button>
        </div>
      </div>
      <div className="px-[5px] pt-[9px]">
        <Rule />
        <div className="flex justify-end pt-2.5 pb-[5px]">
          <PushButton>OK</PushButton>
          <PushButton>Anuluj</PushButton>
        </div>
      </div>
    </section>
  );
}

export default function App() {
  return (
    <div className="h-screen bg-white pb-0.5 overflow-hidden font-['Liberation_Sans',Arial,sans-serif] text-[11px] leading-4 text-black">
      <div className="relative h-full flex flex-col bg-[#d4d0c8]">
        <Caption title="Soldis PROJEKTANT v5.0 Licencja: Edukacyjna" className="bg-linear-to-r from-[#808080] to-[#c0c0c0] text-[#d4d0c8]">
          <div className="flex">
            <CaptionButton name="Minimalizuj"><path d="M1 7.500h6" strokeWidth="2" /></CaptionButton>
            <CaptionButton name="Przywróć"><path d="M3.500 3V.5h5v5H7M1.500 3.500h5v5h-5z" /></CaptionButton>
            <span className="w-0.5" />
            <CaptionButton name="Zamknij program">{CLOSE}</CaptionButton>
          </div>
        </Caption>
        <nav className="h-[21px] flex items-center pl-1.5 text-[#808080] border-b border-black">
          <span className="mr-3">*</span>
          {MENU.map(([item, gap]) => (
            <a key={item} href={`#${item}`} className={gap}>{item}</a>
          ))}
        </nav>

        <div className="flex-1 min-h-0 flex">
          <div className="relative w-3.5 shrink-0 border-l border-l-black border-r border-r-[#404040] flex items-center justify-center">
            <i className="self-stretch absolute inset-y-0 left-[3px] w-0.5 bg-white border-r border-[#808080]" />
            <i className={clsx('absolute -left-px top-[9px] w-[7px] h-2.5 bg-[#d4d0c8]', RAISED)} />
            <i className="ml-1 h-10 border-l border-dashed border-black" />
          </div>
          <div className="flex-1 min-w-0 flex flex-col">
            <TopToolbars />
            <div className="flex-1 min-h-0 flex mr-1">
              <LeftTools />
              <Workspace />
              <RightTools />
            </div>
            <div className={clsx('ml-[68px] mb-[3px] w-[900px] h-[33px] flex items-stretch', RAISED)}>
              <Grip />
              <Tool icon={Screen} name="Tryb ekranu" />
              <Tool icon={Wand} name="Różdżka" />
              <input type="text" aria-label="Polecenie" className={clsx('ml-2 mt-[5px] w-[780px] h-[21px] outline-none', FIELD)} />
            </div>
          </div>
          <HelpBanner />
        </div>

        <BottomBars />
        <VariablesDialog />
        <PickDialog />
      </div>
    </div>
  );
}
